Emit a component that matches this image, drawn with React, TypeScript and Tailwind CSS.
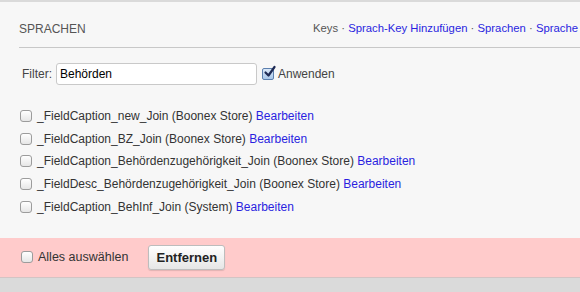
const rows = [
  { key: "_FieldCaption_new_Join", src: "Boonex Store" },
  { key: "_FieldCaption_BZ_Join", src: "Boonex Store" },
  { key: "_FieldCaption_Behördenzugehörigkeit_Join", src: "Boonex Store" },
  { key: "_FieldDesc_Behördenzugehörigkeit_Join", src: "Boonex Store" },
  { key: "_FieldCaption_BehInf_Join", src: "System" },
];

function Box({ checked = false }: { checked?: boolean }) {
  if (checked) {
    return (
      <span className="relative inline-block w-[12px] h-[12px] rounded-[2px] border border-[#5b7fae] bg-gradient-to-b from-[#dbe9f9] to-[#a9c7ea] shrink-0">
        <svg viewBox="0 0 12 12" className="absolute -top-[3px] left-[1px] w-[12px] h-[12px] overflow-visible">
          <path d="M1.5 6.5 L4.5 9.5 L10.5 1" fill="none" stroke="#1f2b55" strokeWidth="2.2" strokeLinecap="round" strokeLinejoin="round" />
        </svg>
      </span>
    );
  }
  return (
    <span className="inline-block w-[12px] h-[12px] rounded-[3px] border border-[#9c9c9c] bg-gradient-to-b from-white to-[#e6e6e6] shrink-0" />
  );
}

export default function App() {
  return (
    <div className="w-[580px] h-[292px] overflow-hidden bg-[#dadada] pt-[2px] font-['Liberation_Sans',Helvetica,Arial,sans-serif] text-[12px] text-[#333]">
      <div className="bg-[#f7f7f7]">
        <div className="ml-[19px] flex items-center justify-between border-b border-[#c8c8c8] h-[46px] pt-[8px] whitespace-nowrap">
          <h2 className="text-[12px] text-[#555] uppercase shrink-0">Sprachen</h2>
          <div className="w-[267px] overflow-hidden shrink-0 text-[11.3px] text-[#555]">
            Keys · <a className="text-[#2a1fe0]">Sprach-Key Hinzufügen</a> ·{" "}
            <a className="text-[#2a1fe0]">Sprachen</a> ·{" "}
            <a className="text-[#2a1fe0]">Sprache Hinzufügen</a>
          </div>
        </div>

        <div className="flex items-center pl-[22px] pt-[15px]">
          <span className="text-[#444]">Filter:</span>
          <div className="ml-[4px] w-[201px] h-[22px] bg-white border border-[#c9c9c9] rounded-[3px] flex items-center px-[3px] text-[12px] text-black">
            Behörden
          </div>
          <span className="ml-[5px] flex"><Box checked /></span>
          <span className="ml-[4px] text-[#444]">Anwenden</span>
        </div>

        <ul className="pl-[20px] pt-[19.5px] pb-[19.5px]">
          {rows.map((r) => (
            <li key={r.key} className="flex items-center gap-[5px] h-[22.75px] whitespace-nowrap">
              <Box />
              <span>
                {r.key} ({r.src}) <a className="text-[#2a1fe0]">Bearbeiten</a>
              </span>
            </li>
          ))}
        </ul>

        <div className="bg-[#ffcbcb] h-[40px] flex items-center pl-[21px] border-b border-[#d3c4c4]">
          <Box />
          <span className="ml-[5px] text-[12.5px] text-[#333]">Alles auswählen</span>
          <button className="ml-[20px] h-[25px] w-[77px] rounded-[3px] border border-[#bdbdbd] bg-gradient-to-b from-white to-[#e6e6e6] shadow-[0_1px_1px_rgba(0,0,0,0.12)] font-bold text-[13px] text-[#222]">
            Entfernen
          </button>
        </div>
      </div>
    </div>
  );
}
